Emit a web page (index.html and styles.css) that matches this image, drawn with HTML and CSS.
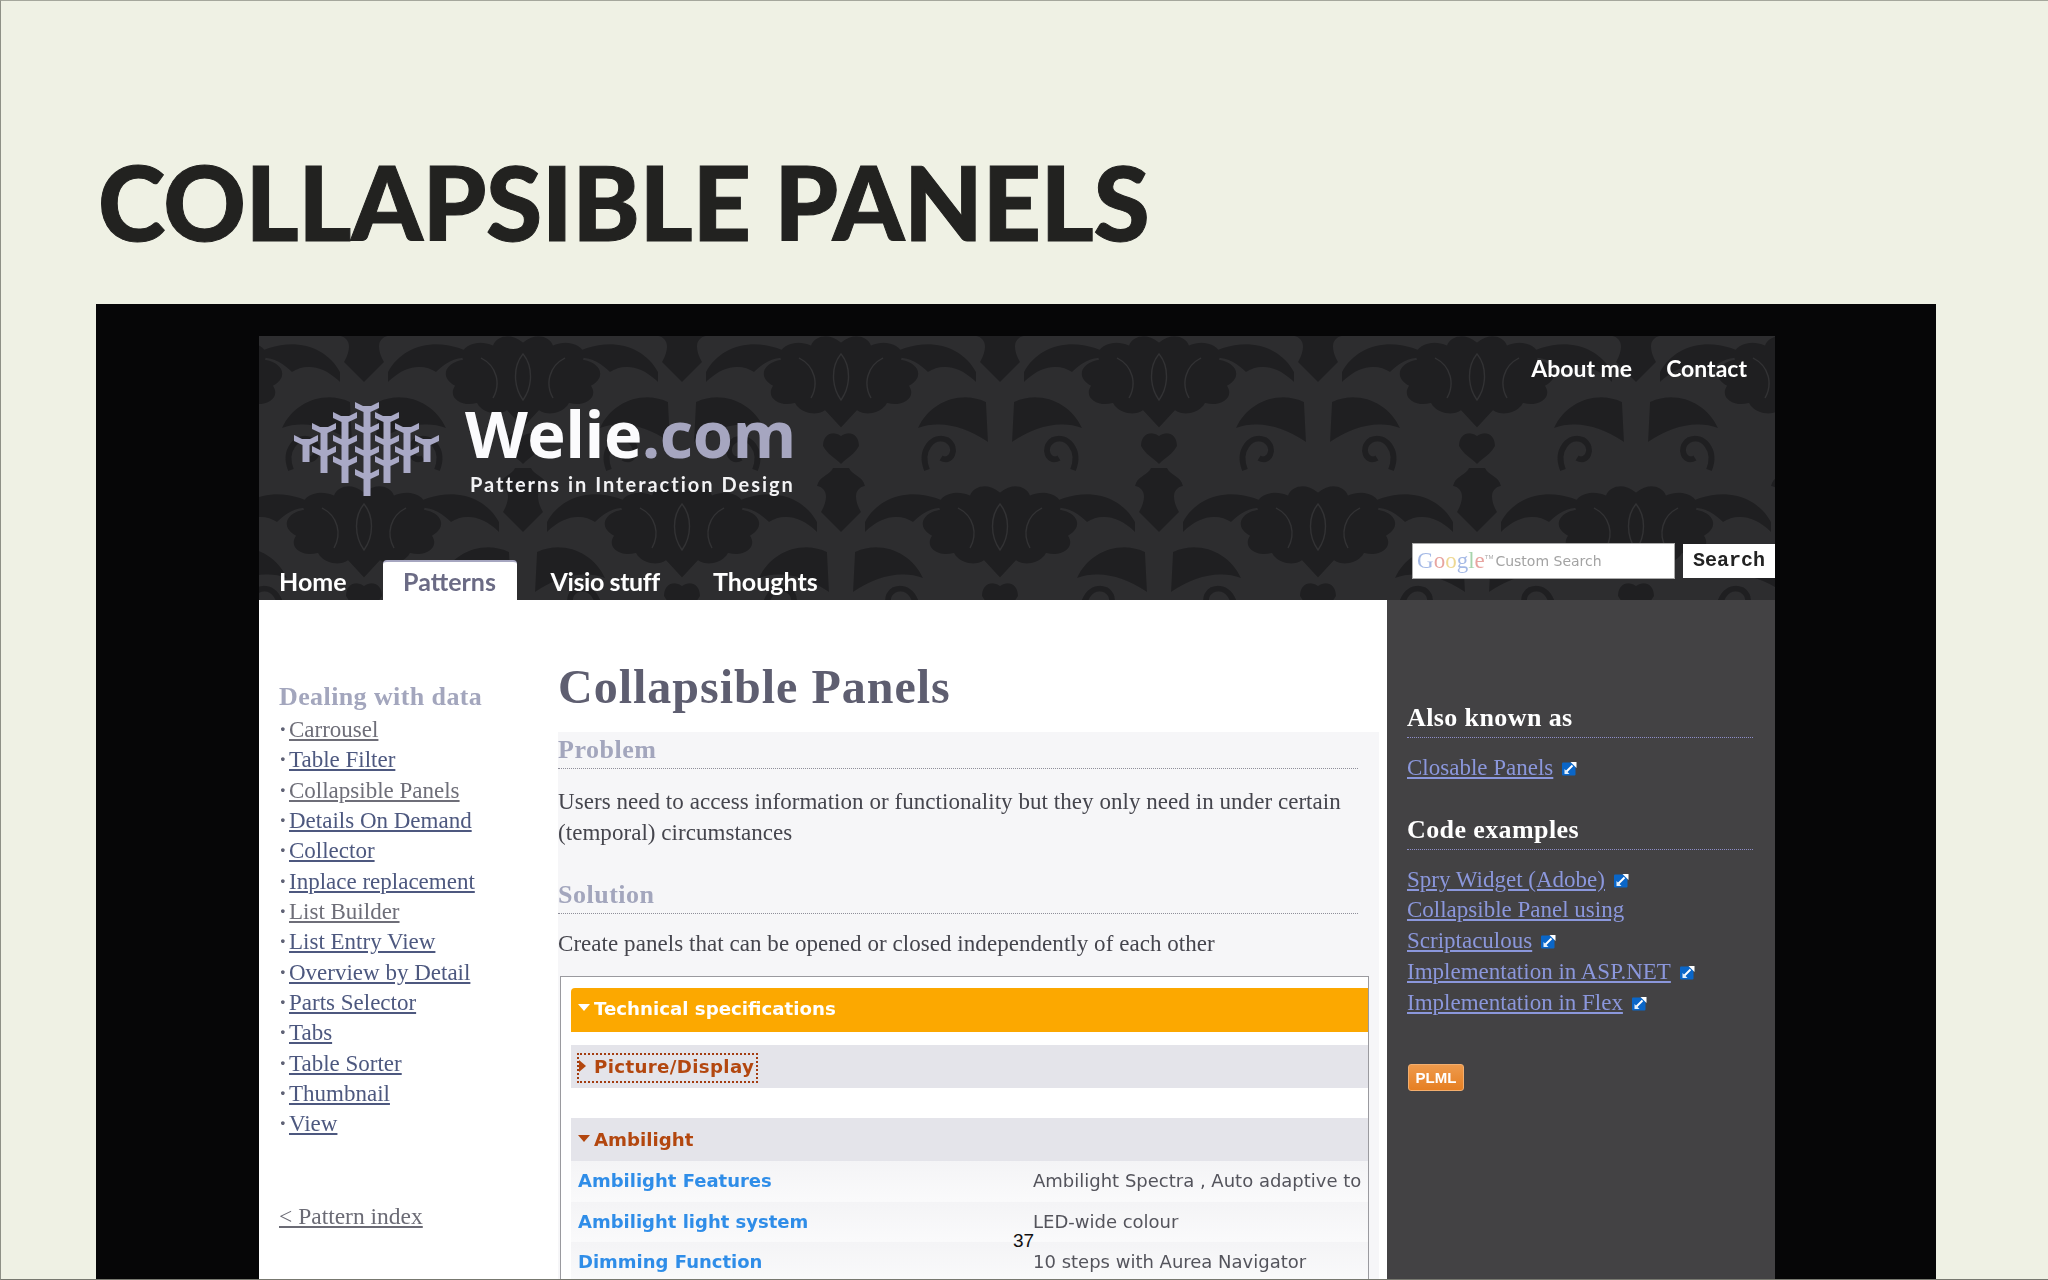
FILE: index.html
```html
<!DOCTYPE html>
<html lang="en">
<head>
<meta charset="utf-8">
<title>Collapsible Panels</title>
<link rel="stylesheet" href="styles.css">
</head>
<body>
<svg class="defs" width="0" height="0" aria-hidden="true">
  <defs>
    <symbol id="ext" viewBox="0 0 15 15">
      <rect x="0" y="1.5" width="13.5" height="13" rx="1" fill="#0a66c8"/>
      <path d="M4.5 10.5 10.5 4.5" stroke="#fff" stroke-width="1.9"/>
      <path d="M8.5 1h6v6z" fill="#fff"/>
      <path d="M2.5 13V8l5 5z" fill="#e4f0fc"/>
    </symbol>
    <g id="tee">
      <path d="M-12-4-4 0H4L12-4V2L3.5 6V23H-3.5V6L-12 2Z"/>
    </g>
    <g id="damask" fill="#1f1f21">
      <path transform="scale(1 .72)" d="M0-52C12-66 26-62 30-48 46-58 66-46 60-28 78-24 84-4 68 8 76 24 62 38 46 32 42 44 26 52 16 42L0 66-16 42C-26 52-42 44-46 32-62 38-76 24-68 8-84-4-78-24-60-28-66-46-46-58-30-48-26-62-12-66 0-52Z"/>
      <path d="M0 56C8 50 18 54 18 66 14 74 6 78 0 84-6 78-14 74-18 66-18 54-8 50 0 56Z"/>
      <path d="M-8 88H8C12 96 22 96 24 106 14 108 12 118 20 132L0 152-20 132C-12 118-14 108-24 106-22 96-12 96-8 88Z"/>
      <path d="M24 142C40 112 82 104 118 130 96 124 84 130 72 142 60 134 42 134 24 152Z"/>
      <path d="M-24 142C-40 112-82 104-118 130-96 124-84 130-72 142-60 134-42 134-24 152Z"/>
      <path d="M14 172C40 160 70 172 82 198 60 190 36 196 12 212ZM-14 172C-40 160-70 172-82 198-60 190-36 196-12 212Z"/>
      <g fill="none" stroke="#1f1f21" stroke-width="6">
        <path d="M86 90C78 70 92 54 106 60 118 68 110 84 100 78"/>
        <path d="M-86 90C-78 70-92 54-106 60-118 68-110 84-100 78"/>
      </g>
      <g fill="none" stroke="#323234" stroke-width="1.3">
        <path d="M0-26C10-14 10 6 0 20-10 6-10-14 0-26ZM-42-22C-26-14-22 4-30 18M42-22C26-14 22 4 30 18"/>
      </g>
    </g>
    <pattern id="wall" width="318" height="300" patternUnits="userSpaceOnUse" patternTransform="translate(-54 44)">
      <use href="#damask"/>
      <use href="#damask" x="318"/>
      <use href="#damask" y="300"/>
      <use href="#damask" x="318" y="300"/>
      <use href="#damask" y="-300"/>
      <use href="#damask" x="318" y="-300"/>
      <use href="#damask" x="159" y="150"/>
      <use href="#damask" x="159" y="-150"/>
    </pattern>
  </defs>
</svg>

<div class="slide">
  <h1 class="slide-title">COLLAPSIBLE PANELS</h1>
  <div class="shot">
    <div class="site">
      <header class="site-head">
        <svg class="wall" width="1516" height="264" aria-hidden="true">
          <rect width="1516" height="264" fill="#2d2d2f"/>
          <rect width="1516" height="264" fill="url(#wall)"/>
        </svg>
        <nav class="top-links"><a>About me</a><a>Contact</a></nav>
        <div class="brand">
          <svg class="logo" width="147" height="97" viewBox="0 0 147 97" fill="#a9a9c6" aria-hidden="true">
            <use href="#tee" x="73" y="4"/><use href="#tee" x="51" y="14"/><use href="#tee" x="93" y="14"/>
            <use href="#tee" x="30" y="25"/><use href="#tee" x="73" y="25"/><use href="#tee" x="113" y="25"/>
            <use href="#tee" x="12" y="37"/><use href="#tee" x="51" y="37"/><use href="#tee" x="93" y="37"/><use href="#tee" x="133" y="37"/>
            <use href="#tee" x="30" y="48"/><use href="#tee" x="73" y="48"/><use href="#tee" x="113" y="48"/>
            <use href="#tee" x="51" y="58"/><use href="#tee" x="93" y="58"/><use href="#tee" x="73" y="71"/>
          </svg>
          <div class="brand-text">
            <div class="brand-name">Welie<span class="brand-tld">.com</span></div>
            <div class="brand-tag">Patterns in Interaction Design</div>
          </div>
        </div>
        <div class="head-bottom">
          <nav class="tabs">
            <a class="tab">Home</a>
            <a class="tab tab-active">Patterns</a>
            <a class="tab">Visio stuff</a>
            <a class="tab">Thoughts</a>
          </nav>
          <form class="search">
            <div class="search-input"><span class="g-logo"><i class="g1">G</i><i class="g2">o</i><i class="g3">o</i><i class="g1">g</i><i class="g4">l</i><i class="g2">e</i></span><sup class="g-tm">TM</sup><span class="g-custom">Custom Search</span></div>
            <div class="search-btn">Search</div>
          </form>
        </div>
      </header>

      <div class="site-body">
        <aside class="side-nav">
          <h3 class="side-title">Dealing with data</h3>
          <ul class="side-list">
            <li><a class="visited">Carrousel</a></li>
            <li><a>Table Filter</a></li>
            <li><a class="visited">Collapsible Panels</a></li>
            <li><a>Details On Demand</a></li>
            <li><a>Collector</a></li>
            <li><a>Inplace replacement</a></li>
            <li><a class="visited">List Builder</a></li>
            <li><a>List Entry View</a></li>
            <li><a>Overview by Detail</a></li>
            <li><a>Parts Selector</a></li>
            <li><a>Tabs</a></li>
            <li><a>Table Sorter</a></li>
            <li><a>Thumbnail</a></li>
            <li><a>View</a></li>
          </ul>
          <a class="back-link">&lt; Pattern index</a>
        </aside>

        <main class="article">
          <h2 class="article-title">Collapsible Panels</h2>
          <div class="article-panel">
            <h3 class="section-title">Problem</h3>
            <p class="section-text">Users need to access information or functionality but they only need in under certain (temporal) circumstances</p>
            <h3 class="section-title section-second">Solution</h3>
            <p class="section-text">Create panels that can be opened or closed independently of each other</p>
            <div class="demo">
              <div class="demo-head"><span class="tri tri-down"></span>Technical specifications</div>
              <div class="demo-row demo-picture"><span class="focus"><span class="tri tri-right"></span>Picture/Display</span></div>
              <div class="demo-row demo-ambi"><span class="tri tri-down tri-brown"></span>Ambilight</div>
              <div class="spec"><b>Ambilight Features</b><span>Ambilight Spectra , Auto adaptive to</span></div>
              <div class="spec"><b>Ambilight light system</b><span>LED-wide colour</span></div>
              <div class="spec"><b>Dimming Function</b><span>10 steps with Aurea Navigator</span></div>
            </div>
          </div>
        </main>

        <aside class="side-info">
          <h3 class="info-title">Also known as</h3>
          <ul class="info-list">
            <li><a>Closable Panels</a><svg class="ext"><use href="#ext"/></svg></li>
          </ul>
          <h3 class="info-title">Code examples</h3>
          <ul class="info-list">
            <li><a>Spry Widget (Adobe)</a><svg class="ext"><use href="#ext"/></svg></li>
            <li><a>Collapsible Panel using<br>Scriptaculous</a><svg class="ext"><use href="#ext"/></svg></li>
            <li><a>Implementation in ASP.NET</a><svg class="ext"><use href="#ext"/></svg></li>
            <li><a>Implementation in Flex</a><svg class="ext"><use href="#ext"/></svg></li>
          </ul>
          <span class="plml">PLML</span>
        </aside>
      </div>
    </div>
  </div>
  <div class="page-no">37</div>
</div>
</body>
</html>
```
FILE: styles.css
```css
* { box-sizing: border-box; }
html, body { margin: 0; padding: 0; background: #eff1e4; }
.defs { position: absolute; }
ul { list-style: none; margin: 0; padding: 0; }
h1, h2, h3, p { margin: 0; }

.slide {
  position: relative;
  width: 2048px;
  height: 1280px;
  overflow: hidden;
  background: #eff1e4;
  border-left: 1px solid #8e9086;
  border-top: 1px solid #a5a79c;
  border-bottom: 1px solid #77786f;
}
.slide-title {
  margin: 146px 0 0 97px;
  height: 157px;
  font: 900 102px/110px Lato, sans-serif;
  letter-spacing: -.4px;
  -webkit-text-stroke: 1px #222220;
  color: #222220;
}
.shot {
  margin-left: 95px;
  width: 1840px;
  height: 980px;
  background: #060607;
  padding: 32px 0 0 163px;
}
.site { width: 1516px; height: 950px; filter: blur(.55px); }

.site-head { position: relative; height: 264px; color: #fff; overflow: hidden; }
.wall { position: absolute; left: 0; top: 0; }
.top-links {
  position: relative;
  display: flex;
  justify-content: flex-end;
  gap: 34px;
  padding: 19px 28px 0 0;
  height: 54px;
  font: 700 23px/26px Lato, sans-serif;
}
.brand { position: relative; display: flex; height: 130px; padding-left: 35px; gap: 24px; }
.logo { margin-top: 12px; }
.brand-text { padding-top: 15px; }
.brand-name { font: 700 65px/68px "Open Sans", sans-serif; letter-spacing: -.5px; color: #fbfbfd; margin-top: -6px; }
.brand-tld { color: #a6a6c0; }
.brand-tag { font: 700 20px/24px Lato, sans-serif; letter-spacing: 2px; margin: 5px 0 0 5px; color: #f2f2f4; }

.head-bottom { position: relative; display: flex; justify-content: space-between; height: 80px; align-items: flex-end; }
.tabs { display: flex; height: 40px; }
.tab { font: 700 25px/42px Lato, sans-serif; margin-left: 20px; }
.tab:nth-child(2) { margin-left: 36px; }
.tab:nth-child(3) { margin-left: 34px; letter-spacing: -.4px; }
.tab:nth-child(4) { margin-left: 53px; }
.tab-active {
  width: 134px;
  text-align: center;
  background: #fff;
  color: #6b6b85;
  font-weight: 700;
  border-top: 2px solid #a6a6c0;
  border-radius: 4px 4px 0 0;
  line-height: 38px;
}
.search { display: flex; gap: 8px; padding-bottom: 21px; align-items: center; }
.search-input {
  width: 263px;
  height: 36px;
  background: #fff;
  border: 1px solid #aaa;
  padding-left: 4px;
  display: flex;
  align-items: center;
}
.g-logo { font: 400 23px/30px "Liberation Serif", serif; opacity: .42; }
.g-logo i { font-style: normal; }
.g1 { color: #2a5bc4; } .g2 { color: #c8281e; } .g3 { color: #d9a400; } .g4 { color: #2f9a3c; }
.g-tm { font: 400 6px/6px "Liberation Sans", sans-serif; color: #aaa; margin: -8px 2px 0 0; }
.g-custom { font: 400 14px/20px "DejaVu Sans", sans-serif; color: #a3a3a3; }
.search-btn {
  width: 92px;
  height: 34px;
  background: #fff;
  color: #222;
  font: 700 20px/34px "Liberation Mono", monospace;
  text-align: center;
}

.site-body { display: flex; height: 686px; background: #fff; font-family: "Liberation Serif", serif; }
.side-nav { width: 299px; padding: 82px 0 0 20px; font-size: 23px; }
.side-title { font: 700 26px/30px "Liberation Serif", serif; letter-spacing: .4px; color: #a3a6bd; margin-bottom: 3px; }
.side-list li { height: 30.35px; line-height: 30px; color: #5f6275; white-space: nowrap; }
.side-list li::before { content: "·"; display: inline-block; width: 10px; font-weight: 700; }
.side-list a { color: #4d587f; text-decoration: underline; }
.side-list a.visited { color: #6e6e78; }
.back-link { display: block; margin-top: 61.5px; font-size: 23.5px; line-height: 30px; color: #6b6b75; text-decoration: underline; }

.article { width: 829px; padding-top: 62px; }
.article-title { font: 700 48px/50px "Liberation Serif", serif; letter-spacing: 1px; color: #5e5e70; }
.article-panel { margin-top: 20px; background: #f6f6f8; height: 554px; padding-top: 3px; width: 821px; overflow: hidden; }
.section-title {
  font: 700 26px/30px "Liberation Serif", serif;
  letter-spacing: .5px;
  color: #a3a6bd;
  border-bottom: 1px dotted #8f8f9a;
  height: 34px;
  width: 800px;
}
.section-second { margin-top: 32px; }
.section-text { font-size: 23px; line-height: 31px; color: #45454d; width: 800px; padding-top: 16.5px; letter-spacing: .05px; }
.section-second + .section-text { padding-top: 14px; }
.demo { margin: 17.7px 0 0 2px; width: 809px; height: 320px; background: #fff; border: 1px solid #9a9a9f; border-bottom: 0; padding: 11px 0 0 10px; font-family: "DejaVu Sans", sans-serif; }
.demo-head { height: 44px; background: #fca800; color: #fff; font: 700 18.2px/42px "DejaVu Sans", sans-serif; padding-left: 7px; border-radius: 4px 0 0 0; }
.demo-row { height: 43px; background: #e4e4ea; color: #b3470f; font: 700 18.2px/43px "DejaVu Sans", sans-serif; padding-left: 7px; }
.demo-picture { margin-top: 13px; }
.demo-ambi { margin-top: 30px; }
.focus { display: inline-block; height: 28px; line-height: 26px; outline: 2px dotted #a33c10; outline-offset: -1px; padding-right: 3px; letter-spacing: .35px; }
.tri { display: inline-block; width: 16px; vertical-align: 2px; position: relative; height: 10px; }
.tri::before { content: ""; position: absolute; left: 0; top: 1px; border-style: solid; border-color: transparent; }
.tri-down::before { border-width: 7px 6px 0 6px; border-top-color: #fff; }
.tri-brown::before { border-top-color: #b3470f; }
.tri-right::before { border-width: 6px 0 6px 7px; border-left-color: #b3470f; top: -1px; left: 1px; }
.spec { display: flex; height: 40.5px; padding-left: 7px; background: linear-gradient(#f4f4f6, #fafafb); font: 400 18px/39px "DejaVu Sans", sans-serif; color: #54545c; white-space: nowrap; overflow: hidden; }
.spec b { width: 455px; color: #2f8de8; flex: none; font-weight: 700; }

.side-info { width: 388px; background: #434244; padding: 103px 0 0 20px; color: #fff; }
.info-title { font: 700 26px/30px "Liberation Serif", serif; letter-spacing: .4px; width: 346px; height: 35px; border-bottom: 1px dotted #8d8dc8; color: #fff; }
.info-list { padding-top: 15px; margin-bottom: 31px; font-size: 23px; line-height: 30.7px; }
.info-list a { color: #8b97dc; text-decoration: underline; }
.ext { width: 15px; height: 15px; margin-left: 9px; vertical-align: -1px; }
.plml {
  display: block;
  width: 56px;
  height: 27px;
  margin: 46px 0 0 1px;
  background: linear-gradient(#ee9a4c, #e67f22);
  border-radius: 3px;
  border: 1px solid #f3ae6e;
  color: #fff;
  font: 700 15px/25px "Liberation Sans", sans-serif;
  text-align: center;
}
.page-no { position: absolute; left: 1012px; top: 1229px; font: 400 19px/22px "Liberation Sans", sans-serif; color: #111; }
```
